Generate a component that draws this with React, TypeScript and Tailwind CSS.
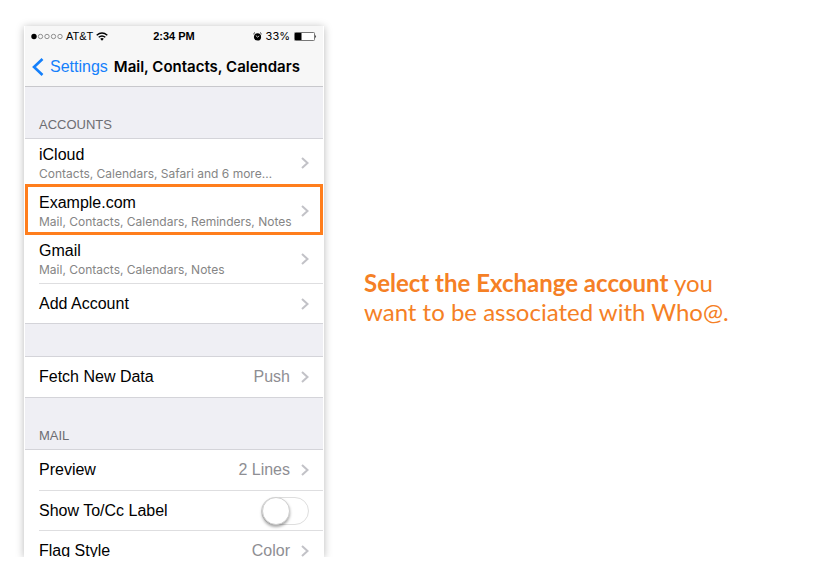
import type { ReactNode } from "react";

function Chevron() {
  return (
    <svg className="h-3 w-2 shrink-0" viewBox="0 0 8 12" fill="none" stroke="#c2c2c7" strokeWidth="2" aria-hidden="true">
      <path d="M1 1 L6.5 6 L1 11" />
    </svg>
  );
}

function AccountRow({ name, detail, selected = false }: { name: string; detail: string; selected?: boolean }) {
  return (
    <button type="button" className="relative flex h-12 w-full items-center justify-between pr-3.5 pl-3.5 text-left">
      <span className="flex flex-col pt-0.5">
        <span className="text-base leading-5 text-black">{name}</span>
        <span className="font-['Inter',sans-serif] text-xs leading-[18px] whitespace-nowrap text-[#858585]">{detail}</span>
      </span>
      <Chevron />
      {selected && <span className="pointer-events-none absolute inset-x-0 -top-[3px] bottom-0 border-3 border-[#ff7e1d]" />}
    </button>
  );
}

function SettingRow({ name, value, divided = false }: { name: string; value?: string; divided?: boolean }) {
  return (
    <button type="button" className="block w-full pl-3.5 text-left">
      <span className={`flex h-10 items-center justify-between pr-3.5 ${divided ? "border-t border-[#dedee0]" : ""}`}>
        <span className="text-base text-black">{name}</span>
        <span className="flex items-center gap-[11px] text-base text-[#8e8e93]">
          {value}
          <Chevron />
        </span>
      </span>
    </button>
  );
}

function SectionTitle({ children }: { children: ReactNode }) {
  return <h2 className="flex h-[51px] items-end px-3.5 pb-[5px] text-[13px] leading-4 text-[#6d6d72]">{children}</h2>;
}

function StatusBar() {
  return (
    <div className="grid h-5 grid-cols-3 items-center pr-1.5 pl-1.5 text-[11px] leading-5 text-black">
      <div className="flex items-center gap-[3px]">
        <svg className="h-[7px] w-8" viewBox="0 0 32 7" aria-hidden="true">
          <circle cx="3" cy="3.5" r="2.7" />
          <g fill="none" stroke="#777" strokeWidth="0.8">
            <circle cx="9.5" cy="3.5" r="2.2" />
            <circle cx="16" cy="3.5" r="2.2" />
            <circle cx="22.5" cy="3.5" r="2.2" />
            <circle cx="29" cy="3.5" r="2.2" />
          </g>
        </svg>
        <span>AT&amp;T</span>
        <svg className="h-[9px] w-3" viewBox="0 0 12 9" fill="none" stroke="#000" strokeWidth="1.4" aria-label="Wi-Fi">
          <path d="M0.7 3.2 Q6 -1.4 11.3 3.2" />
          <path d="M2.7 5.3 Q6 2.5 9.3 5.3" />
          <path d="M4.2 6.7 Q6 5.4 7.8 6.7 L6 8.8 Z" fill="#000" stroke="none" />
        </svg>
      </div>
      <time className="text-center font-bold">2:34 PM</time>
      <div className="flex items-center justify-end gap-1">
        <svg className="h-[9px] w-[9px]" viewBox="0 0 9 9" aria-label="Alarm">
          <circle cx="4.5" cy="4.9" r="3.6" />
          <path d="M0.4 2 L1.9 0.6 M8.6 2 L7.1 0.6" stroke="#000" strokeWidth="0.9" />
          <path d="M2.8 3.5 L4.5 5.1 L6.2 3.9" fill="none" stroke="#fff" strokeWidth="0.8" />
        </svg>
        <span className="font-['Inter',sans-serif]">33%</span>
        <svg className="h-[9px] w-[23px]" viewBox="0 0 23 9" aria-label="Battery">
          <rect x="0.5" y="0.5" width="20" height="8" rx="0.8" fill="#fff" stroke="#777" />
          <rect x="1" y="1" width="6.5" height="7" />
          <path d="M21.3 2.8 Q23 4.5 21.3 6.2 Z" />
        </svg>
      </div>
    </div>
  );
}

export default function App() {
  return (
    <main className="flex items-start bg-white pt-[26px] pl-6">
      <section
        aria-label="Mail, Contacts, Calendars settings"
        className="h-[531px] w-[300px] shrink-0 overflow-hidden border-x border-white bg-white font-['Liberation_Sans',Arial,sans-serif] shadow-[0_1px_8px_rgba(0,0,0,0.28)]"
      >
        <header className="h-[61px] border-b border-[#c8c8cc] bg-[#f7f7f7]">
          <StatusBar />
          <div className="flex h-10 items-center gap-1.5 pt-0.5 pl-[7px]">
            <button type="button" className="flex items-center gap-1.5 text-base text-[#1580fb]">
              <svg className="h-[18px] w-3" viewBox="0 0 12 18" fill="none" stroke="currentColor" strokeWidth="2.6" aria-hidden="true">
                <path d="M10.5 1 L2 9 L10.5 17" />
              </svg>
              Settings
            </button>
            <h1 className="font-['Inter',sans-serif] text-[15px] font-semibold whitespace-nowrap text-black">Mail, Contacts, Calendars</h1>
          </div>
        </header>
        <div className="bg-[#efeff4]">
          <SectionTitle>ACCOUNTS</SectionTitle>
          <div className="border-y border-[#d4d4d9] bg-white">
            <AccountRow name="iCloud" detail="Contacts, Calendars, Safari and 6 more…" />
            <AccountRow name="Example.com" detail="Mail, Contacts, Calendars, Reminders, Notes" selected />
            <AccountRow name="Gmail" detail="Mail, Contacts, Calendars, Notes" />
            <SettingRow name="Add Account" divided />
          </div>
          <div className="mt-8 border-y border-[#d4d4d9] bg-white">
            <SettingRow name="Fetch New Data" value="Push" />
          </div>
          <SectionTitle>MAIL</SectionTitle>
          <div className="border-t border-[#d4d4d9] bg-white">
            <SettingRow name="Preview" value="2 Lines" />
            <label className="block pl-3.5">
              <span className="flex h-10 items-center justify-between border-t border-[#dedee0] pr-3.5 text-base text-black">
                Show To/Cc Label
                <input
                  type="checkbox"
                  role="switch"
                  className="flex h-7 w-12 appearance-none items-center rounded-full border border-[#dedede] bg-white before:h-7 before:w-7 before:rounded-full before:border before:border-[#cfcfcf] before:bg-white before:shadow-[0_2px_3px_rgba(0,0,0,0.35)] checked:justify-end checked:bg-[#4cd964]"
                />
              </span>
            </label>
            <SettingRow name="Flag Style" value="Color" divided />
          </div>
        </div>
      </section>
      <p className="max-w-[420px] pt-[242px] pl-10 font-['Lato',sans-serif] text-2xl leading-[29px] text-[#f58025]">
        <strong className="font-bold">Select the Exchange account</strong> you
        <br />
        want to be associated with Who@.
      </p>
    </main>
  );
}
